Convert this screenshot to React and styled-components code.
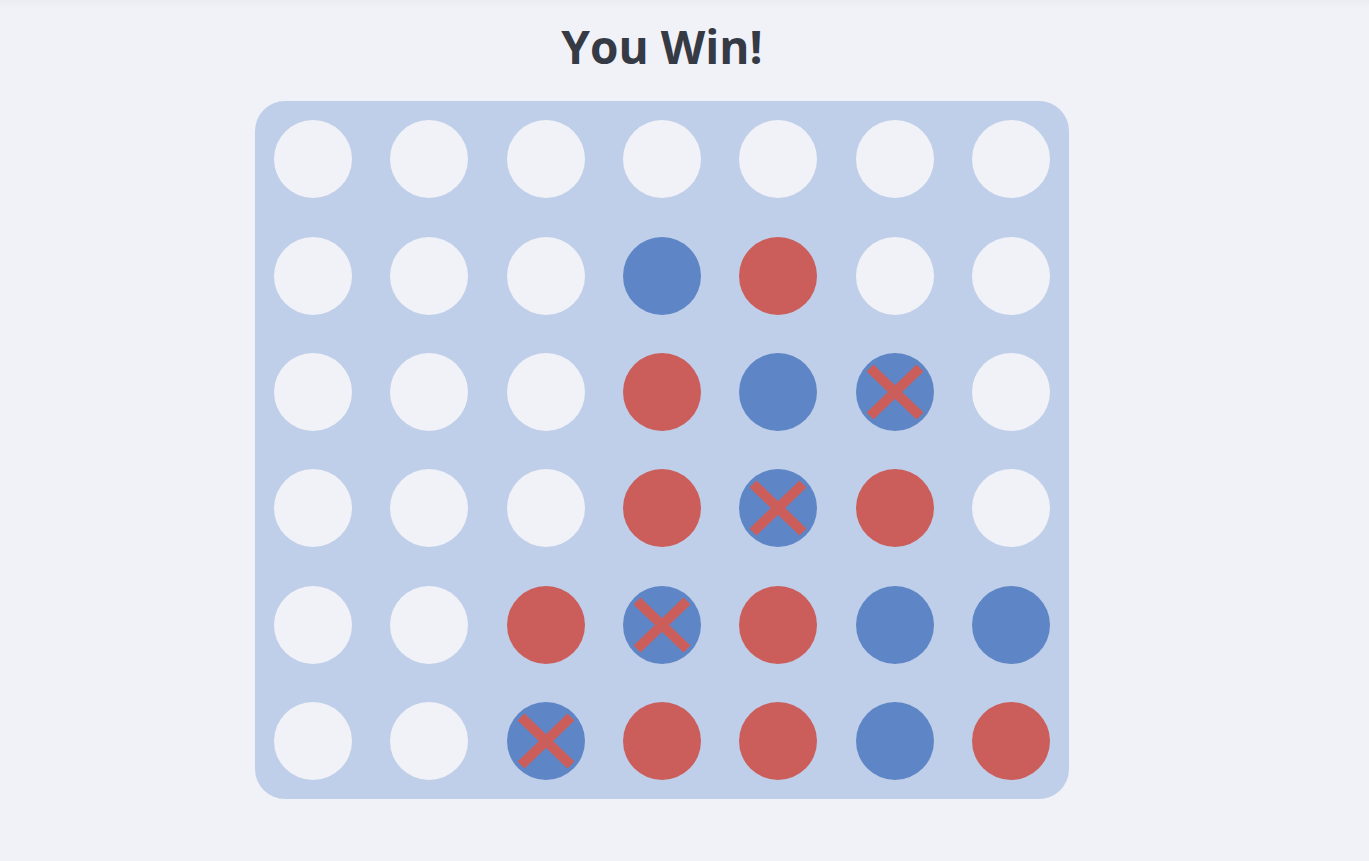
import React from 'react';
import styled, { createGlobalStyle } from 'styled-components';

const GlobalStyle = createGlobalStyle`
  html, body {
    margin: 0;
    padding: 0;
    background: linear-gradient(#ebebf1 0, #f1f2f7 8px) #f1f2f7;
    background-repeat: no-repeat;
    background-color: #f1f2f7;
    font-family: 'Open Sans', 'Liberation Sans', sans-serif;
  }
`;

const Page = styled.div`
  width: 1324px;
  min-height: 861px;
  display: flex;
  flex-direction: column;
  align-items: center;
`;

const Title = styled.h1`
  margin: 19px 0 27px;
  font-size: 46px;
  line-height: 1.2;
  font-weight: 700;
  color: #353a45;
`;

const Board = styled.div`
  display: grid;
  grid-template-columns: repeat(7, 78px);
  grid-auto-rows: 78px;
  column-gap: 38.4px;
  row-gap: 38.4px;
  padding: 19px;
  background: #c0cfe9;
  border-radius: 30px;
`;

const colors = {
  E: '#f1f2f7',
  B: '#5e86c6',
  R: '#cb5e5b',
  X: '#5e86c6',
};

const Cell = styled.div`
  position: relative;
  width: 78px;
  height: 78px;
  border-radius: 50%;
  background: ${({ $kind }) => colors[$kind]};
`;

const Cross = styled.svg`
  position: absolute;
  inset: 0;
`;

const layout = [
  'EEEEEEE',
  'EEEBREE',
  'EEERBXE',
  'EEERXRE',
  'EERXRBB',
  'EEXRRBR',
];

export default function App() {
  return (
    <>
      <GlobalStyle />
      <Page>
        <Title>You Win!</Title>
        <Board>
          {layout.map((row, r) =>
            row.split('').map((kind, c) => (
              <Cell key={`${r}-${c}`} $kind={kind}>
                {kind === 'X' && (
                  <Cross width="78" height="78" viewBox="0 0 78 78">
                    <path
                      d="M14 15 L64 63 M64 15 L14 63"
                      stroke="#cb5e5b"
                      strokeWidth="10"
                    />
                  </Cross>
                )}
              </Cell>
            ))
          )}
        </Board>
      </Page>
    </>
  );
}
